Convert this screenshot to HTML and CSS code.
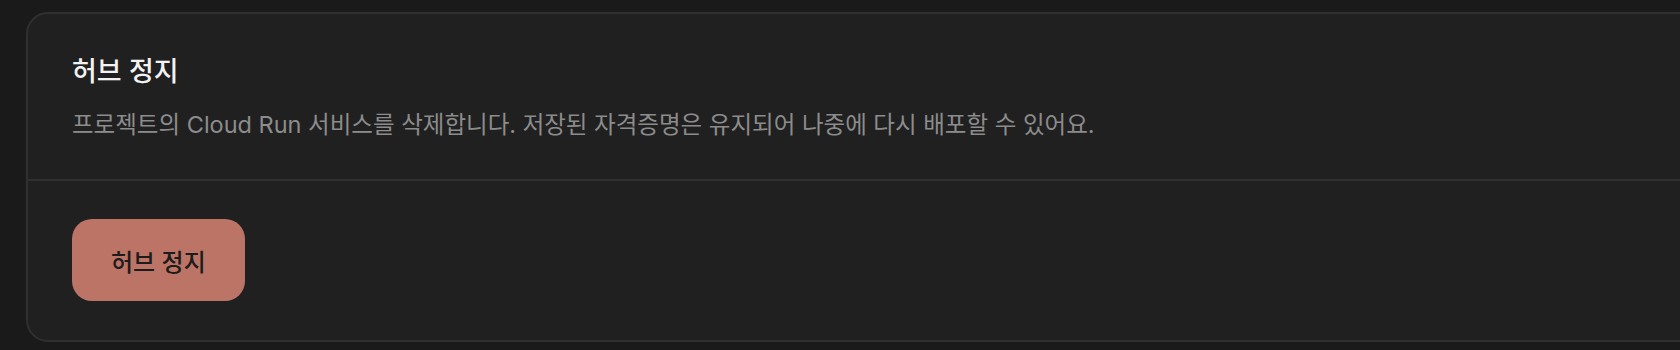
FILE: index.html
```html
<!DOCTYPE html>
<html lang="ko">
<head>
  <meta charset="UTF-8">
  <meta name="viewport" content="width=device-width, initial-scale=1.0">
  <title>허브 정지</title>
  <link rel="stylesheet" href="styles.css">
</head>
<body>
  <section class="card">
    <div class="card-head">
      <h2>허브 정지</h2>
      <p>프로젝트의 Cloud Run 서비스를 삭제합니다. 저장된 자격증명은 유지되어 나중에 다시 배포할 수 있어요.</p>
    </div>
    <div class="card-foot">
      <button class="danger">허브 정지</button>
    </div>
  </section>
</body>
</html>
```

FILE: styles.css
```css
html, body {
  margin: 0;
  background: #1a1a1a;
  overflow: hidden;
}
body {
  font-family: Inter, "Noto Sans CJK KR", sans-serif;
  padding: 12px 0 0 26px;
}
.card {
  background: #202020;
  border: 2px solid #303030;
  border-radius: 22px;
  margin-right: -60px;
  height: 326px;
}
.card-head {
  padding: 41px 44px 0;
  height: 124px;
  border-bottom: 2px solid #303030;
}
.card-head h2 {
  margin: 0;
  font-size: 27px;
  line-height: 34px;
  font-weight: 500;
  color: #f2f2f2;
}
.card-head p {
  margin: 21px 0 0;
  font-size: 23.5px;
  line-height: 30px;
  color: #8c8c8c;
}
.card-foot {
  padding: 38px 44px;
}
.danger {
  font-family: inherit;
  font-size: 24px;
  font-weight: 500;
  color: #1c1c1c;
  background: #bb7465;
  border: none;
  border-radius: 20px;
  height: 82px;
  padding: 0 39px;
}
```
